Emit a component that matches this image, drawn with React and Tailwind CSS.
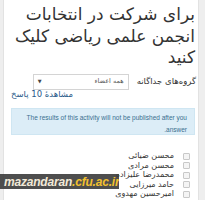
import React from 'react';

const names = ['محسن ضیائی', 'محسن مرادی', 'محمدرضا علیزاده', 'حامد میرزایی', 'امیرحسین مهدوی'];

function Watermark() {
    return (
        <div className="absolute left-0 top-[174px] w-[119px] h-[15px] bg-[#3b3b3b]/90 flex items-center pl-[4px] overflow-hidden">
            <span className="font-['Liberation_Sans',sans-serif] font-bold italic text-[12px] leading-none tracking-[-0.2px] text-[#f3ead8] whitespace-nowrap" dir="ltr">
                mazandaran<span className="text-[#f2c12e]">.cfu.ac.ir</span>
            </span>
        </div>
    );
}

export default function App() {
    return (
        <div className="relative w-[205px] h-[200px] overflow-hidden bg-[#eeeeee] font-['DejaVu_Sans',sans-serif]">
            <div dir="rtl" className="relative ml-[3px] mr-[6px] h-full bg-white border-x border-[#e2e2e2] text-[#333]">
                <h2 className="pt-[4px] pr-[3px] text-[17px] leading-[21.5px] font-normal text-[#333] whitespace-nowrap">
                    برای شرکت در انتخابات
                    <br />
                    انجمن علمی ریاضی کلیک
                    <br />
                    کنید
                </h2>

                <span className="absolute top-[58px] right-[14px] text-[7px] leading-none text-[#666]">..</span>

                {/* group selector */}
                <div className="flex items-center gap-[8px] pr-[2px] mt-[5px]">
                    <span className="text-[8.5px]">گروه‌های جداگانه</span>
                    <div className="w-[96px] h-[16px] border border-[#d4d4d4] flex items-center justify-between px-[4px]">
                        <span className="text-[6.5px] text-[#555]">همه اعضاء</span>
                        <span className="text-[5px] text-[#444]">▼</span>
                    </div>
                </div>

                <div dir="ltr" className="pl-[7px] mt-[-1px] text-[8.5px] leading-[10px] text-[#2a5a8a]">
                    <span dir="rtl">مشاهدهٔ 10 پاسخ</span>
                </div>

                {/* notice */}
                <div className="mt-[9px] ml-[7px] mr-[3px] h-[27px] bg-[#dcedf7] border border-[#cfe6f2] pt-[3px] pr-[7px] pl-[5px] text-[6.5px] leading-[12.5px] text-[#3a6f8f] font-['Liberation_Sans',sans-serif]">
                    The results of this activity will not be published after you answer.
                </div>

                {/* members */}
                <ul className="mt-[17px] pr-[8px] flex flex-col">
                    {names.map(n => (
                        <li key={n} className="flex items-center gap-[9px] h-[9.5px]">
                            <span className="w-[7px] h-[7px] border border-[#c8c8c8] bg-[#f4f4f4] rounded-[1px]" />
                            <span className="text-[8px] leading-none text-[#333]">{n}</span>
                        </li>
                    ))}
                </ul>
            </div>
            <Watermark />
        </div>
    );
}
